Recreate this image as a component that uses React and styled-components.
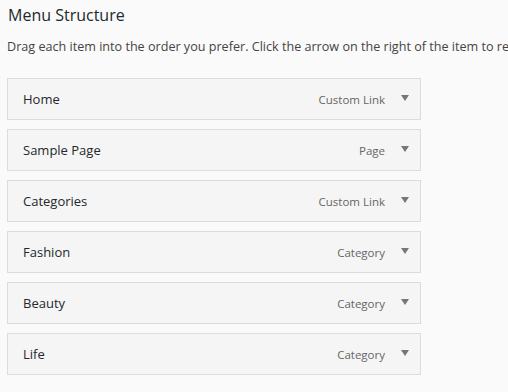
import React from "react";
import styled, { createGlobalStyle } from "styled-components";

const Global = createGlobalStyle`
  html, body { margin: 0; padding: 0; background: #fafafa; }
  body { font-family: "Open Sans", "Noto Sans", "Liberation Sans", sans-serif; color: #23282d; }
`;

const Page = styled.div`
  padding: 4px 0 0 7px;
  width: 501px;
  overflow: hidden;
`;

const Title = styled.h3`
  margin: 0;
  font-size: 16px;
  font-weight: 500;
  line-height: 22px;
  color: #23282d;
  padding-left: 1px;
`;

const Desc = styled.p`
  margin: 12px 0 0;
  font-size: 12.6px;
  line-height: 18px;
  color: #444;
  white-space: nowrap;
`;

const List = styled.ul`
  list-style: none;
  margin: 22px 0 0;
  padding: 0;
  display: flex;
  flex-direction: column;
  gap: 9px;
`;

const Item = styled.li`
  width: 414px;
  box-sizing: border-box;
  height: 42px;
  border: 1px solid #dcdcdc;
  background: #f5f5f5;
  display: flex;
  align-items: center;
  padding: 0 11px 0 15px;
`;

const ItemTitle = styled.span`
  flex: 1;
  font-size: 13px;
  color: #23282d;
`;

const ItemType = styled.span`
  font-size: 11.5px;
  color: #666;
  margin-right: 16px;
`;

const Arrow = styled.svg`
  width: 8px;
  height: 6px;
  margin-top: -3px;
`;

const items = [
  ["Home", "Custom Link"],
  ["Sample Page", "Page"],
  ["Categories", "Custom Link"],
  ["Fashion", "Category"],
  ["Beauty", "Category"],
  ["Life", "Category"],
];

export default function App() {
  return (
    <Page>
      <Global />
      <Title>Menu Structure</Title>
      <Desc>Drag each item into the order you prefer. Click the arrow on the right of the item to reveal additional configuration options.</Desc>
      <List>
        {items.map(([t, k]) => (
          <Item key={t}>
            <ItemTitle>{t}</ItemTitle>
            <ItemType>{k}</ItemType>
            <Arrow viewBox="0 0 8 6"><path d="M0 0H8L4 6Z" fill="#72777c" /></Arrow>
          </Item>
        ))}
      </List>
    </Page>
  );
}
